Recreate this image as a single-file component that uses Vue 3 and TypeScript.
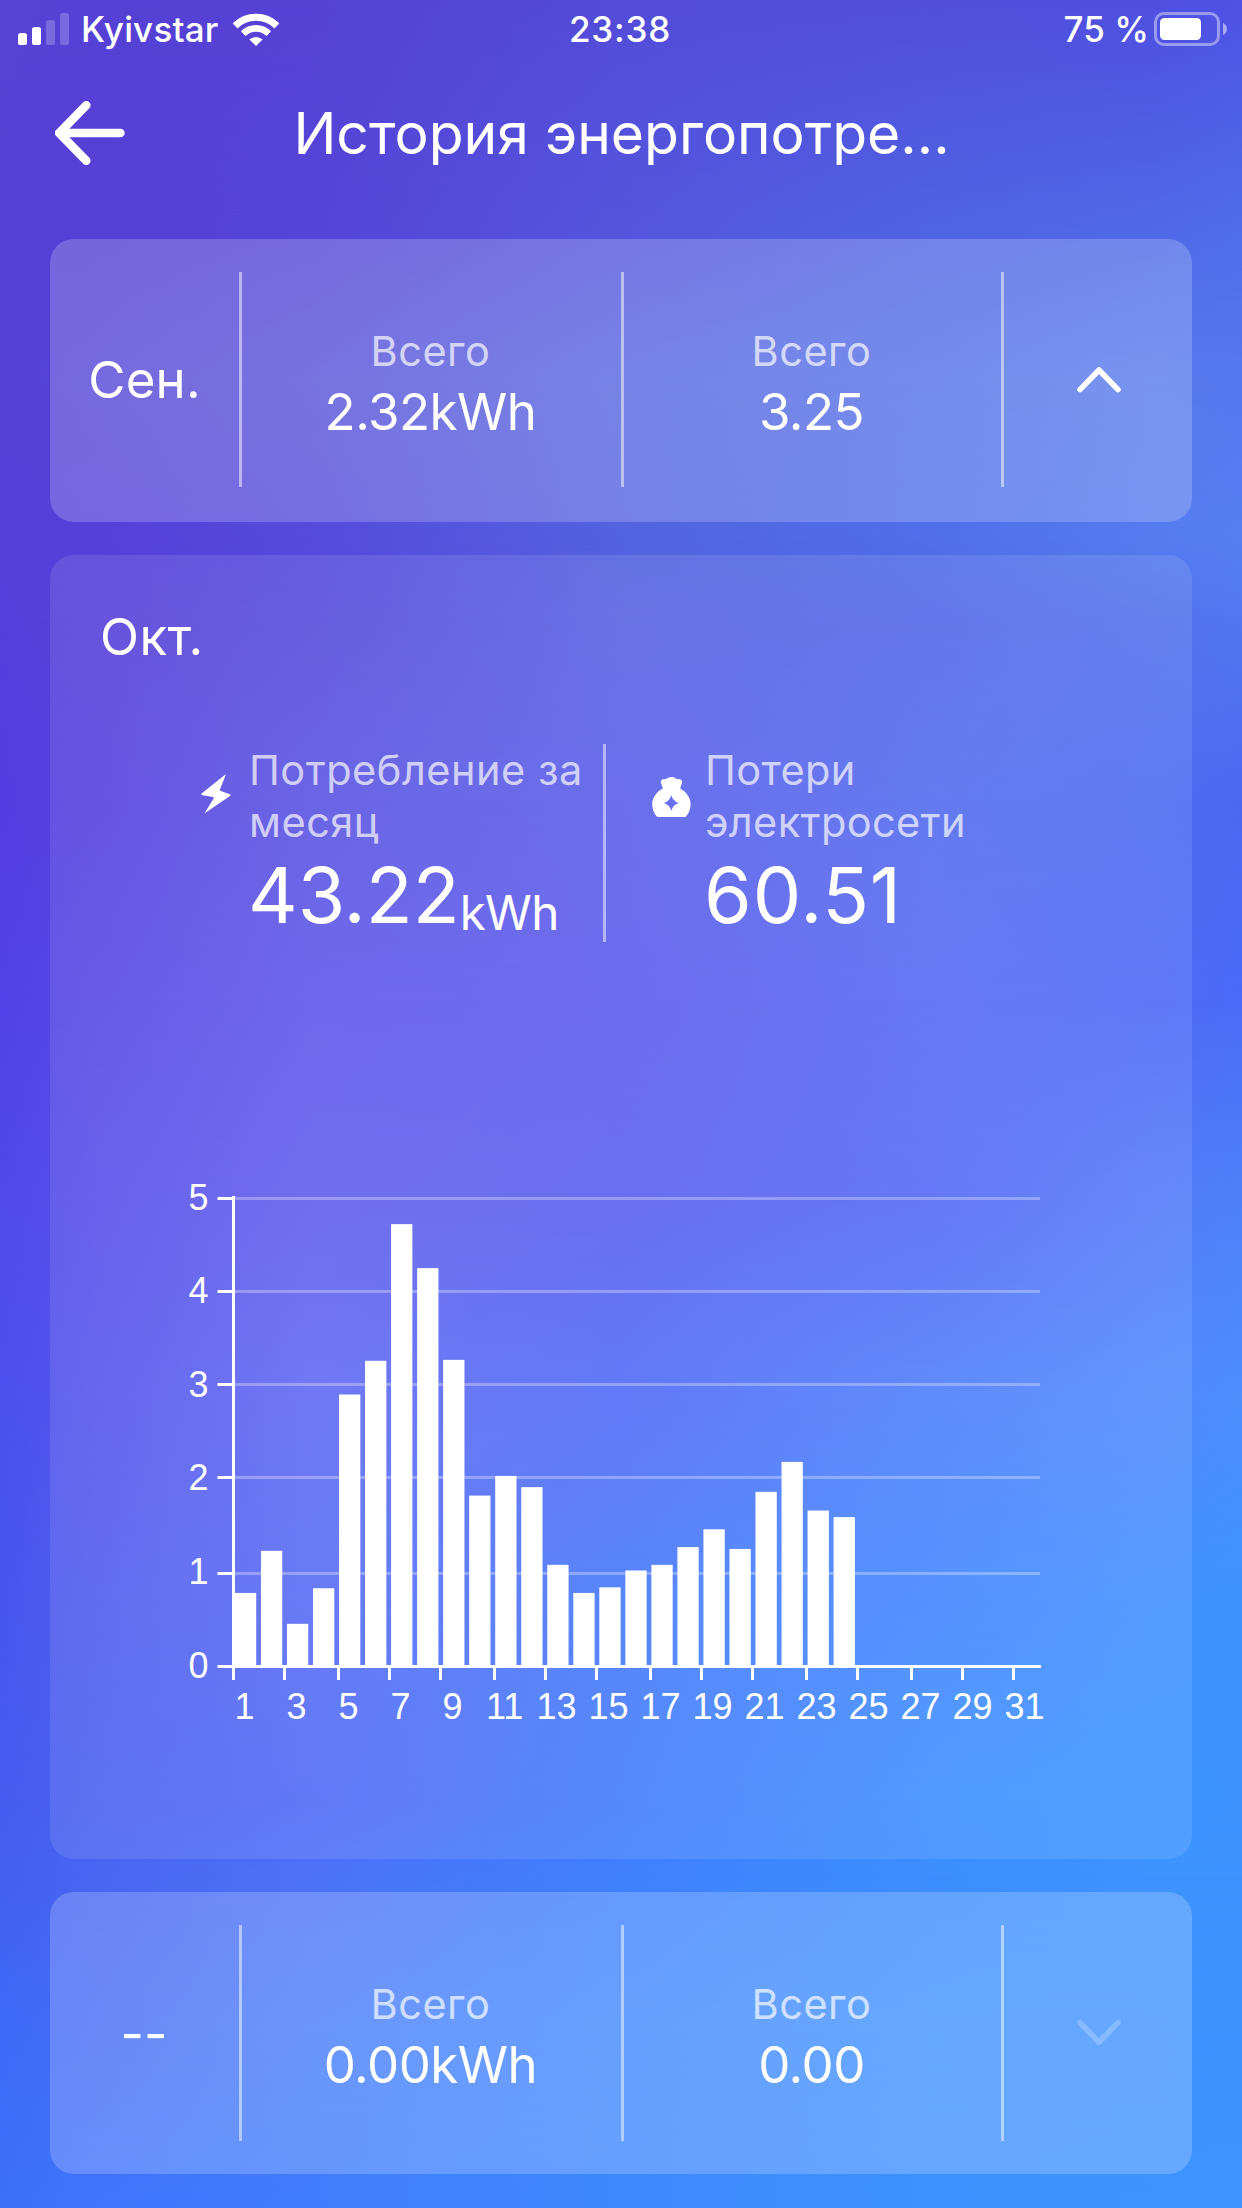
<script setup lang="ts">
interface Summary {
  month: string
  energy: string
  cost: string
}

const previous: Summary = { month: 'Сен.', energy: '2.32kWh', cost: '3.25' }
const next: Summary = { month: '--', energy: '0.00kWh', cost: '0.00' }

// Colour mesh of the backdrop: each row holds colours at the stops below.
const stops = [0, 8, 25, 50, 75, 93, 100]
const mesh: { y: number; colors: string[] }[] = [
  { y: 0, colors: ['#5743d6', '#5641d5', '#5642d5', '#534cd9', '#514fdb', '#4f4fe0', '#4f52e6'] },
  { y: 240, colors: ['#5540d5', '#563fd6', '#5544d8', '#5456dd', '#5064e4', '#506ae8', '#4f6fea'] },
  { y: 380, colors: ['#5540d6', '#5645d7', '#5650d8', '#5465e0', '#526fe7', '#567aec', '#5478ee'] },
  { y: 540, colors: ['#563fda', '#5740da', '#554add', '#5362df', '#506fe9', '#547cef', '#5680f2'] },
  { y: 620, colors: ['#563edc', '#5741d9', '#564cdb', '#5762e3', '#5568e8', '#5372ec', '#5177f0'] },
  { y: 800, colors: ['#553ce0', '#5741df', '#5b54e2', '#5b5fea', '#536bee', '#4d6df1', '#4b69f3'] },
  { y: 1000, colors: ['#5142e6', '#5849e5', '#5f57ea', '#5c5cec', '#5769f3', '#4e6af5', '#4a6cf8'] },
  { y: 1200, colors: ['#4f4ae9', '#5850eb', '#615fed', '#5960ee', '#5569f5', '#547bf9', '#4f80fa'] },
  { y: 1400, colors: ['#4b50ed', '#5557ed', '#606af2', '#516bf6', '#4d7ffb', '#528afd', '#4c8ffd'] },
  { y: 1600, colors: ['#4856ee', '#525dee', '#586cf4', '#4579fa', '#4286ff', '#4191ff', '#4093ff'] },
  { y: 1800, colors: ['#455cef', '#4b61f1', '#516af5', '#437cfa', '#3d8fff', '#3d94ff', '#3e93ff'] },
  { y: 1875, colors: ['#4360f0', '#4866f2', '#4d72f8', '#3f80fe', '#3d8dff', '#3e93ff', '#3e93ff'] },
  { y: 2030, colors: ['#3e6af7', '#456cf5', '#467cfb', '#4088ff', '#3f92ff', '#3f92ff', '#3e93ff'] },
  { y: 2208, colors: ['#3c70f8', '#3f76fb', '#407dfe', '#3f88ff', '#3f91ff', '#4094ff', '#4094ff'] },
]
const strip = (colors: string[]) =>
  `linear-gradient(to right, ${colors.map((c, i) => `${c} ${stops[i]}%`).join(', ')})`
const bands = mesh.slice(0, -1).map((row, i) => ({
  height: `${mesh[i + 1].y - row.y}px`,
  from: strip(row.colors),
  to: strip(mesh[i + 1].colors),
}))

// Daily consumption, kWh
const usage = [
  0.77, 1.22, 0.44, 0.82, 2.89, 3.25, 4.71, 4.24, 3.26, 1.81, 2.02, 1.9, 1.07, 0.77, 0.83, 1.01, 1.07, 1.26, 1.45,
  1.24, 1.85, 2.17, 1.65, 1.58,
]
const baseY = 485
const unit = 93.6
const gridOffsets = [0, 93, 189, 282, 375, 468]
const bars = usage.map((v, i) => ({ x: 64.9 + i * 26.03, y: baseY - v * unit, h: v * unit }))
const ticks = Array.from({ length: 16 }, (_, i) => ({
  x: 62 + Math.round(i * 17.348) * 3,
  label: 2 * i + 1,
  cx: 74.6 + i * 52,
}))
</script>

<template>
  <div class="screen">
    <div class="backdrop">
      <div v-for="(b, i) in bands" :key="i" class="band" :style="{ height: b.height, background: b.from }">
        <div class="fade" :style="{ background: b.to }"></div>
      </div>
    </div>

    <div class="content">
      <div class="status">
        <div class="status-left">
          <svg class="signal" width="51" height="32" viewBox="0 0 51 32" fill="#fff">
            <rect x="0" y="20" width="9" height="12" rx="2.6" />
            <rect x="14" y="14" width="9" height="18" rx="2.6" />
            <rect x="28" y="7" width="9" height="25" rx="2.6" opacity=".22" />
            <rect x="42" y="0" width="9" height="32" rx="2.6" opacity=".22" />
          </svg>
          <span class="carrier">Kyivstar</span>
          <svg class="wifi" width="46" height="34" viewBox="0 0 46 34" fill="none" stroke="#fff">
            <path d="M2.1 12.9A29.6 29.6 0 0 1 43.9 12.9" stroke-width="7" />
            <path d="M10.2 20.6A18.3 18.3 0 0 1 35.8 20.6" stroke-width="6.6" />
            <path d="M16.4 26.6A9.6 9.6 0 0 1 29.6 26.6L23 33Z" fill="#fff" stroke="none" />
          </svg>
        </div>
        <span class="clock">23:38</span>
        <div class="status-right">
          <span>75 %</span>
          <svg class="battery" width="74" height="34" viewBox="0 0 74 34">
            <rect x="1.5" y="1.5" width="63" height="31" rx="8.5" fill="none" stroke="#fff" stroke-opacity=".42" stroke-width="3" />
            <rect x="6" y="6" width="41" height="22" rx="4.5" fill="#fff" />
            <path d="M69 11C74.3 13.2 74.3 20.8 69 23Z" fill="#fff" fill-opacity=".5" />
          </svg>
        </div>
      </div>

      <header class="header">
        <svg class="back" width="72" height="66" viewBox="0 0 72 66" fill="none" stroke="#fff" stroke-width="8.6" stroke-linecap="round" stroke-linejoin="round">
          <path d="M65.4 33H5.4M31.3 5.3L4.2 33L31.3 60.7" />
        </svg>
        <h1>История энергопотре...</h1>
      </header>

      <section class="card row row-top">
        <div class="month">{{ previous.month }}</div>
        <div class="rule"></div>
        <div class="cell">
          <span class="label">Всего</span>
          <span class="value">{{ previous.energy }}</span>
        </div>
        <div class="rule"></div>
        <div class="cell">
          <span class="label">Всего</span>
          <span class="value">{{ previous.cost }}</span>
        </div>
        <div class="rule"></div>
        <div class="toggle">
          <svg width="46" height="28" viewBox="0 0 46 28" fill="none" stroke="#fff" stroke-width="5.6" stroke-linecap="round" stroke-linejoin="round">
            <path d="M4 23.6L23 4L42 23.6" />
          </svg>
        </div>
      </section>

      <section class="card detail">
        <h2>Окт.</h2>
        <div class="stats">
          <svg class="bolt" width="30" height="40" viewBox="0 0 30 40" fill="#fff">
            <path d="M25 0L18.6 16.6L29.4 20.4Q29.8 21.2 29 21.9L3.4 39.4L12.6 24.6Q13.2 23.4 12 23L.6 20.9Q0 20.2 .6 19.5Z" />
          </svg>
          <div class="stat">
            <p class="label">Потребление за месяц</p>
            <p class="big">43.22<span class="unit">kWh</span></p>
          </div>
          <div class="stat-rule"></div>
          <svg class="bag" width="39" height="40" viewBox="0 0 39 40" fill="#fff" fill-rule="evenodd">
            <path d="M14 2Q19.5-2 25 2Q30.5 1.5 30 5.5Q29 9 28.2 11.6C34.8 15.2 38.6 21 38.6 27.6Q38.4 35.2 33.6 40H5.2Q.4 35.2.2 27.6C.2 21 4 15.2 10.8 11.6Q10 9 8.8 5.5Q8.4 1.5 14 2ZM19.3 18.2Q17.6 24.2 11.8 26Q17.6 27.8 19.3 33.8Q21 27.8 26.8 26Q21 24.2 19.3 18.2Z" />
          </svg>
          <div class="stat loss">
            <p class="label">Потери<br />электросети</p>
            <p class="big wide">60.51</p>
          </div>
        </div>

        <svg class="chart" width="890" height="580" viewBox="0 -20 890 580" fill="#fff">
          <rect v-for="g in gridOffsets.slice(1)" :key="'g' + g" x="65" :y="baseY - g" width="805" height="3" opacity=".3" />
          <rect v-for="(b, i) in bars" :key="'b' + i" :x="b.x" :y="b.y" width="21.3" :height="b.h" />
          <rect x="62" y="16" width="3" height="472" />
          <rect x="62" :y="baseY" width="809" height="3" />
          <g v-for="(g, k) in gridOffsets" :key="'y' + k">
            <rect x="47.5" :y="baseY - g" width="15" height="3" />
            <text x="38.5" :y="497.6 - k * unit" text-anchor="end">{{ k }}</text>
          </g>
          <g v-for="t in ticks" :key="'x' + t.label">
            <rect :x="t.x" :y="baseY" width="3" height="15" />
            <text :x="t.cx" y="539" text-anchor="middle">{{ t.label }}</text>
          </g>
        </svg>
      </section>

      <section class="card row row-bottom">
        <div class="month">{{ next.month }}</div>
        <div class="rule"></div>
        <div class="cell">
          <span class="label">Всего</span>
          <span class="value">{{ next.energy }}</span>
        </div>
        <div class="rule"></div>
        <div class="cell">
          <span class="label">Всего</span>
          <span class="value">{{ next.cost }}</span>
        </div>
        <div class="rule"></div>
        <div class="toggle disabled">
          <svg width="46" height="28" viewBox="0 0 46 28" fill="none" stroke="#fff" stroke-width="5.6" stroke-linecap="round" stroke-linejoin="round">
            <path d="M4 3.6L23 23.2L42 3.6" />
          </svg>
        </div>
      </section>
    </div>
  </div>
</template>

<style>
body {
  margin: 0;
}
</style>

<style scoped>
.screen {
  position: relative;
  width: 1242px;
  height: 2208px;
  overflow: hidden;
  color: #fff;
  font-family: Inter, 'Noto Sans', sans-serif;
}
.backdrop {
  position: absolute;
  inset: 0;
}
.fade {
  height: 100%;
  mask-image: linear-gradient(to bottom, transparent, #000);
}
.content {
  position: relative;
}
.status {
  display: grid;
  grid-template-columns: 1fr auto 1fr;
  height: 58px;
  padding: 0 14px 0 18px;
  font-size: 35px;
  font-weight: 500;
  line-height: 58px;
  white-space: pre;
}
.status-left,
.status-right {
  display: flex;
}
.status-right {
  justify-content: flex-end;
}
.signal {
  margin-top: 13px;
}
.carrier {
  margin-left: 12px;
  letter-spacing: 0.16px;
}
.wifi {
  margin: 13px 0 0 15px;
}
.clock {
  margin: 0 3px 0 -3px;
  letter-spacing: 0.8px;
}
.battery {
  margin: 12px 0 0 5px;
}
.header {
  display: grid;
  grid-template-columns: 72px 1fr 72px;
  align-items: center;
  height: 150px;
  padding: 0 54px 0 55px;
}
h1 {
  margin: 0;
  padding-top: 2px;
  font-size: 57px;
  font-weight: 400;
  line-height: 70px;
  text-align: center;
  white-space: nowrap;
}
.card {
  box-sizing: border-box;
  margin: 0 50px;
  border-radius: 24px;
}
.row {
  display: grid;
  grid-template-columns: 189px 3px 379px 3px 377px 3px 188px;
  height: 283px;
  padding: 33px 0 35px;
  background: rgba(255, 255, 255, 0.2);
}
.row-top {
  margin-top: 31px;
}
.row-bottom {
  height: 282px;
  margin-top: 33px;
  padding: 33px 0;
}
.rule {
  background: rgba(255, 255, 255, 0.5);
}
.month {
  align-self: center;
  font-size: 51px;
  line-height: 60px;
  letter-spacing: 0.15px;
  text-align: center;
}
.row-bottom .month {
  padding: 1px 1px 0 0;
}
.cell {
  display: flex;
  flex-direction: column;
  align-self: center;
  padding: 3px 2px 0 0;
  text-align: center;
}
.label {
  margin: 0;
  color: rgba(255, 255, 255, 0.7);
  font-size: 41.5px;
  letter-spacing: 0.5px;
}
.cell .label {
  line-height: 61px;
}
.value {
  font-size: 51px;
  line-height: 60px;
  letter-spacing: -0.5px;
}
.toggle {
  display: flex;
  align-items: center;
  justify-content: center;
}
.toggle svg {
  margin-left: 2px;
}
.disabled {
  opacity: 0.22;
}
.detail {
  height: 1304px;
  margin-top: 33px;
  padding-top: 56px;
  background: rgba(255, 255, 255, 0.1);
}
h2 {
  margin: 0 0 81px 50px;
  font-size: 51px;
  font-weight: 400;
  line-height: 52px;
  letter-spacing: 0.4px;
}
.stats {
  display: flex;
  height: 198px;
}
.bolt {
  flex: none;
  margin: 30px 18px 0 151px;
}
.stat {
  width: 354px;
}
.stat .label {
  line-height: 52px;
}
.loss .label {
  margin-left: -1px;
  letter-spacing: 0.38px;
}
.stat-rule {
  width: 3px;
  background: rgba(255, 255, 255, 0.5);
}
.bag {
  flex: none;
  margin: 33px 15px 0 46px;
}
.big {
  margin: 0 0 0 -1px;
  font-size: 77px;
  line-height: 94px;
  white-space: nowrap;
}
.wide {
  margin-left: -2px;
  letter-spacing: 0.9px;
}
.unit {
  font-size: 47.5px;
  line-height: 1;
  letter-spacing: -0.7px;
  vertical-align: -7px;
}
.chart {
  display: block;
  margin: 218px 0 0 120px;
  font-family: 'Liberation Sans', Arial, sans-serif;
  font-size: 36px;
}
</style>
